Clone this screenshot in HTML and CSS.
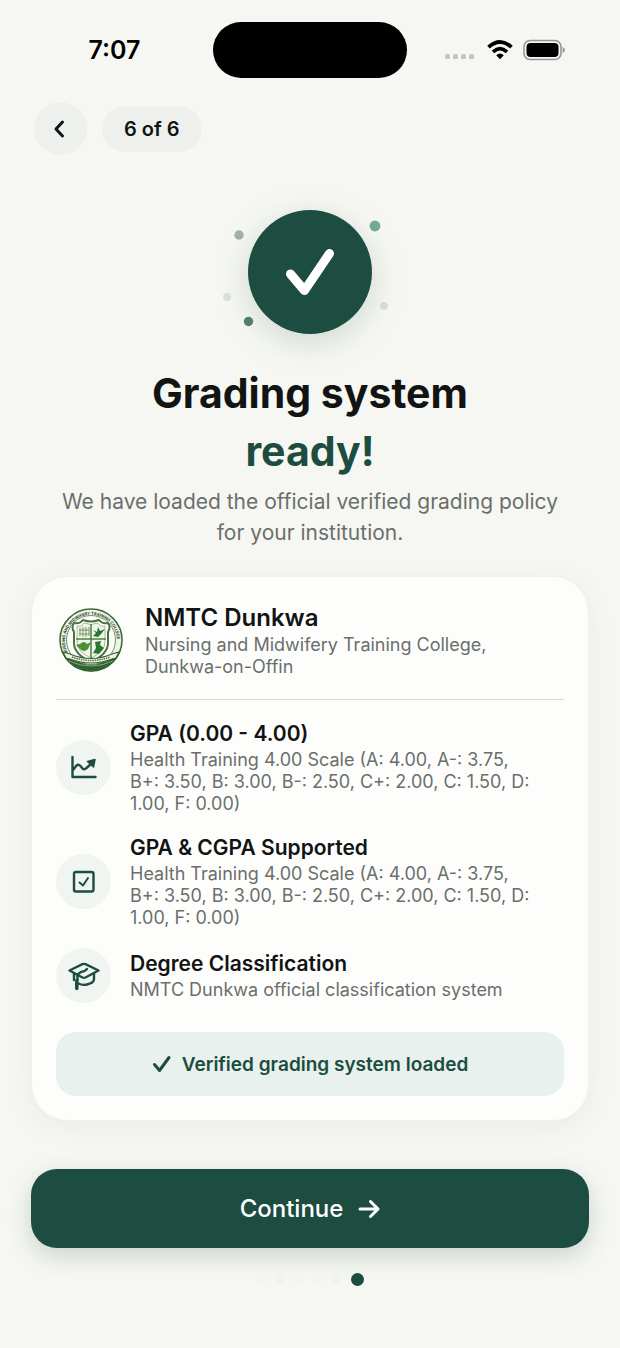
FILE: index.html
```
<!DOCTYPE html>
<html lang="en">
<head>
<meta charset="utf-8">
<title>Grading system ready</title>
<meta name="viewport" content="width=device-width, initial-scale=1">
<link rel="stylesheet" href="styles.css">
</head>
<body>

<div class="status">
	<div class="time">7:07</div>
	<div class="island"></div>
	<div class="signals">
		<svg width="32" height="22" viewBox="0 0 32 22" fill="#c4c5c3">
			<rect x="0" y="15" width="5" height="5" rx="1.5"/>
			<rect x="8" y="15" width="5" height="5" rx="1.5"/>
			<rect x="16" y="15" width="5" height="5" rx="1.5"/>
			<rect x="24" y="15" width="5" height="5" rx="1.5"/>
		</svg>
		<svg width="26" height="20" viewBox="0 0 26 20">
			<path d="M1.500 7.200Q13-3.200 24.500 7.200" fill="none" stroke="#000" stroke-width="3.800"/>
			<path d="M6 11.800Q13 5.600 20 11.800" fill="none" stroke="#000" stroke-width="3.600"/>
			<path d="M9.200 15.200Q13 11.800 16.800 15.200L13 19.200Z"/>
		</svg>
		<svg width="42" height="22" viewBox="0 0 42 22">
			<rect x="1" y="1.500" width="37" height="19" rx="6" fill="none" stroke="#969795" stroke-width="1.600"/>
			<rect x="3.500" y="4" width="32" height="14" rx="4"/>
			<path d="M39.600 8Q42 9 42 11T39.600 14Z" fill="#969795"/>
		</svg>
	</div>
</div>

<header>
	<button class="back" aria-label="Back">
		<svg width="20" height="20" viewBox="0 0 20 20" fill="none" stroke="#111413" stroke-width="3" stroke-linecap="round" stroke-linejoin="round"><path d="M11.500 3L5 10L11.500 17"/></svg>
	</button>
	<div class="step">6 of 6</div>
</header>

<main>
	<div class="seal">
		<svg width="180" height="124" viewBox="0 0 180 124">
			<circle cx="19" cy="25" r="4.700" fill="#a1b2aa"/>
			<circle cx="155" cy="16" r="5.400" fill="#75ab95"/>
			<circle cx="7" cy="87" r="3.900" fill="#dcdfdc"/>
			<circle cx="164" cy="96" r="3.900" fill="#dadedb"/>
			<circle cx="28.500" cy="111.500" r="4.700" fill="#577e71"/>
			<circle class="disc" cx="90" cy="62" r="62" fill="#1d4c40"/>
			<path d="M70.500 64L84.500 80.500L109.500 43.500" fill="none" stroke="#fff" stroke-width="9" stroke-linecap="round" stroke-linejoin="round"/>
		</svg>
	</div>

	<h1>Grading system<br><em>ready!</em></h1>
	<p class="lead">We have loaded the official verified grading policy for your institution.</p>

	<section class="card">
		<div class="school">
			<svg class="crest" width="70" height="70" viewBox="0 0 70 70">
				<defs><path id="ring" d="M12 48A26 26 0 1 1 58 48"/></defs>
				<circle cx="35" cy="35" r="31" fill="#eff3e8" stroke="#43663d" stroke-width="1.600"/>
				<path d="M5.500 46A31.500 31.500 0 0 0 64.500 46Q58 57 35 59Q12 57 5.500 46Z" fill="#2f6330"/>
				<path d="M13 56Q35 66 57 56" fill="none" stroke="#87a674" stroke-width="1"/>
				<text><textPath href="#ring">NURSING AND MIDWIFERY TRAINING COLLEGE</textPath></text>
				<circle cx="35" cy="35" r="24.500" fill="#fbfcf8" stroke="#719066" stroke-width="1"/>
				<path d="M18 18Q24 19 27 15Q35 18 43 15Q46 19 52 18Q55 22 52 27V38Q52 49 35 57Q18 49 18 38V27Q15 22 18 18Z" fill="#fff" stroke="#4a7342" stroke-width="2"/>
				<path d="M21 21Q26 22 28 18Q35 21 42 18Q44 22 49 21V37Q49 47 35 53Q21 47 21 37Z" fill="#f0f5e9" stroke="#81a06b" stroke-width=".7"/>
				<path d="M35 19V53M20 34H50" stroke="#4e813f" stroke-width="1.500"/>
				<path d="M24 23V31M27 22V32M30 22V32M33 22V31M23 25H33M23 29H33" stroke="#79906d" stroke-width="1"/>
				<path d="M37 25L41 27L42 22L44 26L49 24L45 29L42 32L37 31L40 28Z" fill="#2a7332"/>
				<path d="M24 39Q28 35 31 39L35 37L32 44Q28 48 24 44L20 40Z" fill="#4b9236"/>
				<path d="M39 37L45 36L44 40L48 43L43 49L37 48L40 43Z" fill="#2b7834"/>
				<path d="M7 47L14 49Q35 58 56 49L63 47L60 53L56 54Q35 62 14 54L10 53Z" fill="#eef3e4" stroke="#355f32" stroke-width="1.200"/>
				<path d="M16 52Q35 59 54 52" fill="none" stroke="#58704f" stroke-width="1.500" stroke-dasharray="1.500 .8"/>
			</svg>
			<div>
				<h2>NMTC Dunkwa</h2>
				<p>Nursing and Midwifery Training College, Dunkwa-on-Offin</p>
			</div>
		</div>

		<ul class="features">
			<li>
				<div class="icon">
					<svg width="32" height="32" viewBox="0 0 32 32">
						<path d="M4.500 5V25H27.500M5 18L8.500 13.500Q10.500 12 12.500 14L14.500 16.500Q16.500 18 18.500 16L24 11"/>
						<path d="M19.500 9.500L27 7.500L25.500 15Z" fill="#1d4c40" stroke-width="1.500"/>
					</svg>
				</div>
				<div>
					<h3>GPA (0.00 - 4.00)</h3>
					<p>Health Training 4.00 Scale (A: 4.00, A-: 3.75, B+: 3.50, B: 3.00, B-: 2.50, C+: 2.00, C: 1.50, D: 1.00, F: 0.00)</p>
				</div>
			</li>
			<li>
				<div class="icon">
					<svg width="32" height="32" viewBox="0 0 32 32">
						<rect x="6" y="6" width="19.500" height="19.500" rx="2"/>
						<path d="M11.500 16.500L15 19.500L20 12" stroke-width="2"/>
					</svg>
				</div>
				<div>
					<h3>GPA &amp; CGPA Supported</h3>
					<p>Health Training 4.00 Scale (A: 4.00, A-: 3.75, B+: 3.50, B: 3.00, B-: 2.50, C+: 2.00, C: 1.50, D: 1.00, F: 0.00)</p>
				</div>
			</li>
			<li>
				<div class="icon">
					<svg width="32" height="32" viewBox="0 0 32 32">
						<path d="M1.500 10.500L14.500 4.200Q16 3.500 17.500 4.200L30.500 10.500L17.500 17.500Q16 18.200 14.500 17.500Z"/>
						<path d="M19 9Q17 11.500 13 12L9.500 14.500V20M6 14V20M10.500 23.500Q14 25.500 19 24.500Q26 23 26 19V14"/>
						<path d="M8.800 20.500V28.500" stroke-width="3.500"/>
					</svg>
				</div>
				<div>
					<h3>Degree Classification</h3>
					<p>NMTC Dunkwa official classification system</p>
				</div>
			</li>
		</ul>

		<div class="verified">
			<svg width="20" height="20" viewBox="0 0 20 20" fill="none" stroke="#1d4c40" stroke-width="3" stroke-linecap="round" stroke-linejoin="round"><path d="M2.500 10.500L7.500 16.500L17 3.500"/></svg>
			Verified grading system loaded
		</div>
	</section>

	<button class="continue">
		Continue
		<svg width="22" height="20" viewBox="0 0 22 20" fill="none" stroke="#fff" stroke-width="3" stroke-linecap="round" stroke-linejoin="round"><path d="M2 10H20M12.500 2.500L20 10L12.500 17.500"/></svg>
	</button>

	<div class="pager">
		<i></i><i></i><i></i><i></i><i></i><i class="on"></i>
	</div>
</main>

</body>
</html>
```
FILE: styles.css
```
* {
	box-sizing: border-box;
}
body {
	margin: 0;
	background: #f6f7f2;
	color: #111413;
	font-family: Inter, "Liberation Sans", sans-serif;
}
h1, h2, h3, p, ul {
	margin: 0;
	padding: 0;
}
button {
	border: 0;
	font-family: inherit;
	cursor: pointer;
}
svg {
	display: block;
	flex: none;
}

/* status bar */
.status {
	display: grid;
	grid-template-columns: 1fr 194px 1fr;
	align-items: center;
	padding-top: 22px;
}
.time {
	padding-left: 16px;
	text-align: center;
	font-size: 25px;
	font-weight: 600;
	color: #000;
}
.island {
	height: 56px;
	border-radius: 28px;
	background: #000;
}
.signals {
	display: flex;
	align-items: center;
	justify-content: center;
	gap: 10px;
	padding-right: 18px;
}

/* header */
header {
	display: flex;
	align-items: center;
	gap: 15px;
	padding: 24px 34px 0;
}
.back {
	display: flex;
	align-items: center;
	justify-content: center;
	width: 53px;
	height: 53px;
	padding: 0;
	border-radius: 50%;
	background: #eef0ed;
}
.step {
	padding: 0 22px;
	border-radius: 23px;
	background: #eef0ed;
	font-size: 20px;
	font-weight: 600;
	line-height: 46px;
}

main {
	padding: 55px 31px 60px;
}
.seal {
	display: flex;
	justify-content: center;
}
.seal svg {
	overflow: visible;
}
.disc {
	filter: drop-shadow(0 8px 16px rgba(29, 76, 64, .18));
}
h1 {
	margin-top: 30px;
	text-align: center;
	font-size: 41px;
	font-weight: 700;
	line-height: 58px;
}
h1 em {
	font-style: normal;
	color: #1d4c40;
}
.lead {
	max-width: 520px;
	margin: 6px auto 28px;
	text-align: center;
	font-size: 21px;
	line-height: 31px;
	color: #6a6f6c;
}

/* card */
.card {
	padding: 24px;
	border: 1px solid #f0f1ee;
	border-radius: 36px;
	background: #fdfefc;
	box-shadow: 0 6px 30px rgba(0, 0, 0, .05);
}
.card p {
	color: #6a6f6c;
}
.school {
	display: flex;
	align-items: center;
	gap: 19px;
	padding-bottom: 21px;
	border-bottom: 1px solid #d8dbd8;
}
.crest text {
	font-size: 4px;
	font-weight: 700;
	fill: #263d25;
}
h2 {
	font-size: 24px;
	font-weight: 600;
	line-height: 33px;
}
.school p {
	max-width: 380px;
	font-size: 18px;
	line-height: 22px;
}
.features {
	display: grid;
	gap: 19px;
	padding: 20px 0 29px;
	list-style: none;
}
.features li {
	display: flex;
	align-items: center;
	gap: 19px;
	padding-right: 32px;
}
.icon {
	display: flex;
	flex: none;
	align-items: center;
	justify-content: center;
	width: 55px;
	height: 55px;
	border-radius: 50%;
	background: #f0f5f2;
}
.icon svg {
	fill: none;
	stroke: #1d4c40;
	stroke-width: 2.4;
	stroke-linecap: round;
	stroke-linejoin: round;
}
h3 {
	margin-bottom: 2px;
	font-size: 21px;
	font-weight: 600;
	line-height: 27px;
}
.features p {
	font-size: 18px;
	line-height: 22px;
}
.verified {
	display: flex;
	align-items: center;
	justify-content: center;
	gap: 10px;
	height: 64px;
	border-radius: 20px;
	background: #e8f1ed;
	font-size: 19px;
	font-weight: 600;
	color: #1d4c40;
}

.continue {
	display: flex;
	align-items: center;
	justify-content: center;
	gap: 15px;
	width: 100%;
	height: 79px;
	margin-top: 48px;
	border-radius: 26px;
	background: #1d4c40;
	box-shadow: 0 8px 24px rgba(29, 76, 64, .2);
	color: #fff;
	font-size: 24px;
	font-weight: 500;
}

/* step dots */
.pager {
	display: flex;
	align-items: center;
	justify-content: center;
	gap: 10px;
	margin-top: 25px;
}
.pager i {
	width: 9px;
	height: 9px;
	border-radius: 50%;
	background: #f0f4ef;
}
.pager .on {
	width: 13px;
	height: 13px;
	background: #1d4c40;
}
```
